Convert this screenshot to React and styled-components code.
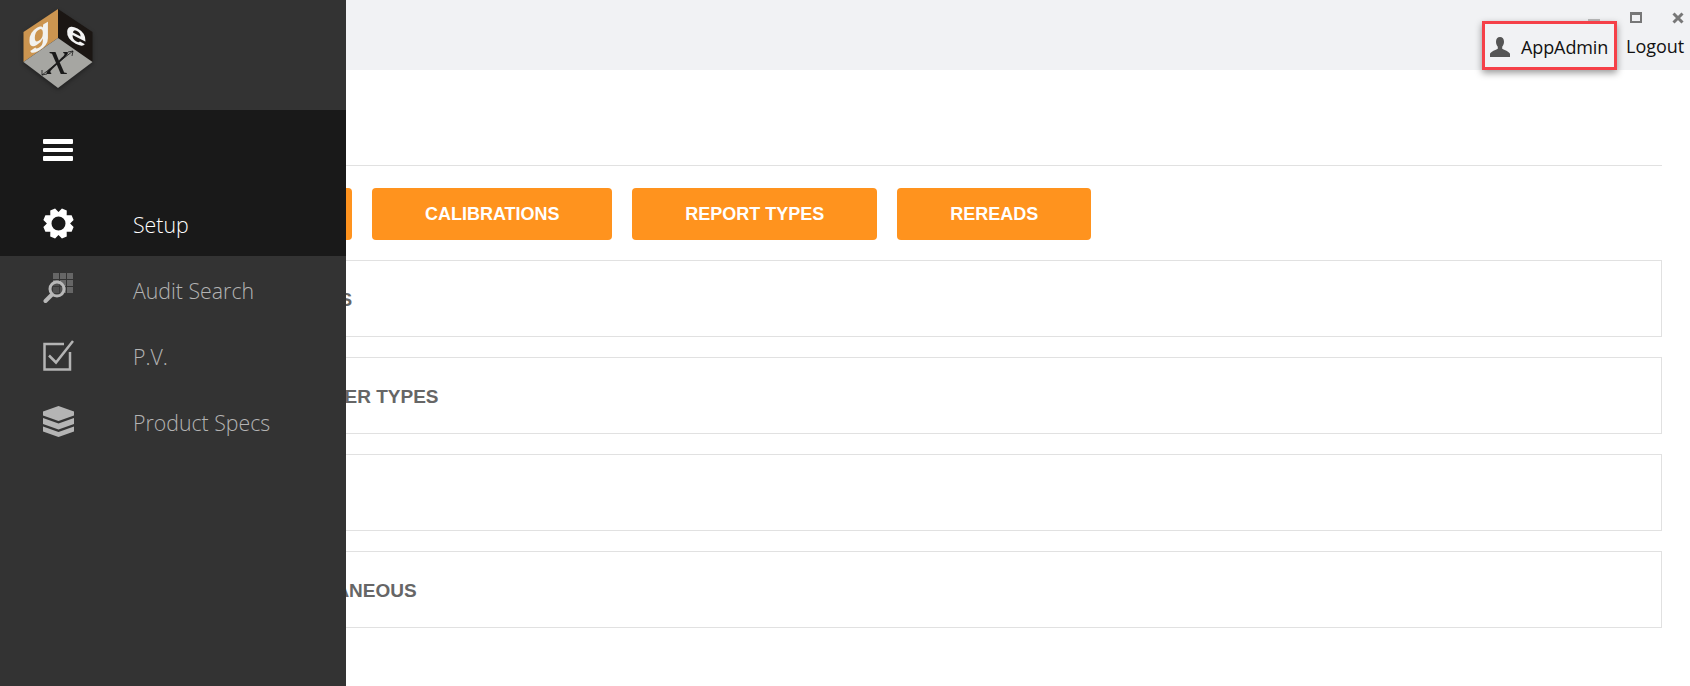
import React from 'react'
import styled, { createGlobalStyle } from 'styled-components'

const Logo = () => (
  <LogoSvg viewBox="0 0 116 98" width="116" height="98">
    <polygon points="58,9 23.5,32 23.5,62 58,38" fill="#cc9550" />
    <polygon points="58,9 92.5,32 92.5,62 58,38" fill="#1b1613" />
    <polygon points="58,38 92.5,62 58,88 23.5,62" fill="#a6a6a2" />
    <text transform="matrix(1.15 -0.65 0 1 28 50)" fontFamily="Liberation Sans" fontWeight="700" fontSize="32" fill="#f2f2f0">g</text>
    <text transform="matrix(1.35 0.7 -0.1 1 65 38)" fontFamily="Liberation Sans" fontWeight="700" fontSize="28" fill="#f4f4f4">e</text>
    <text x="47" y="74" fontFamily="Liberation Serif" fontStyle="italic" fontSize="48" fill="#1a1a1a">x</text>
    <path d="M42 75l31-24M73 51l-5 1M73 51l-1 5M42 75l5-1M42 75l0-5" stroke="#1a1a1a" strokeWidth="0.8" fill="none" />
  </LogoSvg>
)

const Burger = () => (
  <BurgerBox>
    <i />
    <i />
    <i />
  </BurgerBox>
)

// eight blunt teeth, first one a bit off the vertical like the original glyph
const gearPath = () => {
  const pts = []
  for (let i = 0; i < 8; i++) {
    const a = ((i * 45 + 22.5) * Math.PI) / 180
    const w = 0.17
    const g = 0.22
    ;[
      [a - g - w, 11.6],
      [a - w, 15.5],
      [a + w, 15.5],
      [a + g + w, 11.6]
    ].forEach(([t, r]) => pts.push((15.5 + r * Math.sin(t)).toFixed(2) + ' ' + (15.5 - r * Math.cos(t)).toFixed(2)))
  }
  return 'M' + pts.join('L') + 'Z'
}

const GearIcon = () => (
  <svg viewBox="0 0 31 31" width="31" height="31">
    <path
      fill="#fff"
      fillRule="evenodd"
      d={gearPath() + 'M15.5 8.500a7 7 0 1 0 0 14a7 7 0 1 0 0-14Z'}
    />
  </svg>
)

const AuditIcon = () => (
  <svg viewBox="0 0 32 32" width="32" height="32">
    <g fill="#666">
      {[10, 17, 24].map(x => [0, 7, 14].map(y => <rect key={x + '-' + y} x={x} y={y} width="6" height="6" />))}
    </g>
    <circle cx="14" cy="16" r="7" fill="rgba(60,60,60,0.55)" stroke="#b8b8b8" strokeWidth="3" />
    <path d="M8.500 22L2.500 28" stroke="#b8b8b8" strokeWidth="4" strokeLinecap="round" />
  </svg>
)

const CheckIcon = () => (
  <svg viewBox="0 0 31 31" width="31" height="31" fill="none" stroke="#b4b4b4">
    <path d="M27 12v17.500H1.500V4H21" strokeWidth="2.500" />
    <path d="M6 15.500l7 7L30 1" strokeWidth="2.500" />
  </svg>
)

const StackIcon = () => (
  <svg viewBox="0 0 31 31" width="31" height="31" fill="#b4b4b4">
    <path d="M15.500 0L31 5.500v4L15.500 15 0 9.500v-4z" />
    <path d="M0 12l15.500 5.500L31 12v6l-15.500 5.500L0 18z" />
    <path d="M0 20.500L15.500 26 31 20.500V25.500L15.500 31 0 25.500z" />
  </svg>
)

const UserIcon = () => (
  <svg viewBox="0 0 20 20" width="20" height="20" fill="#555">
    <path d="M10 0C7.500 0 6 2 6 4.800c0 2 .8 3.800 1.800 5v2C5.800 13 1 14.500 0 16.800V20h20v-3.200c-1-2.300-5.800-3.800-7.800-5v-2c1-1.200 1.800-3 1.800-5C14 2 12.500 0 10 0z" />
  </svg>
)

const CloseIcon = () => (
  <svg viewBox="0 0 12 12" width="12" height="12">
    <path d="M1.500 1.500l9 9M10.500 1.500l-9 9" stroke="#777" strokeWidth="3" />
  </svg>
)

const menu = [
  { label: 'Audit Search', icon: <AuditIcon /> },
  { label: 'P.V.', icon: <CheckIcon /> },
  { label: 'Product Specs', icon: <StackIcon /> }
]

const buttons = ['CALIBRATIONS', 'REPORT TYPES', 'REREADS']
const panels = ['READINGS', 'PARAMETER TYPES', 'UNITS', 'MISCELLANEOUS']

const MenuItem = ({ label, icon, active }) => (
  <Row>
    <IconSlot>{icon}</IconSlot>
    <RowLabel $active={active}>{label}</RowLabel>
  </Row>
)

const App = () => (
  <Page>
    <GlobalStyle />
    <Sidebar>
      <Brand>
        <Logo />
      </Brand>
      <ActiveArea>
        <BurgerRow>
          <Burger />
        </BurgerRow>
        <MenuItem label="Setup" icon={<GearIcon />} active />
      </ActiveArea>
      {menu.map(m => (
        <MenuItem key={m.label} {...m} />
      ))}
    </Sidebar>
    <Header>
      <WindowControls>
        <MinButton />
        <MaxButton />
        <CloseIcon />
      </WindowControls>
      <UserBox>
        <UserIcon />
        <span>AppAdmin</span>
      </UserBox>
      <Logout>Logout</Logout>
    </Header>
    <Content>
      <Rule />
      <ButtonRow>
        <OrangeButton $under={324}>GENERAL</OrangeButton>
        {buttons.map(b => (
          <OrangeButton key={b}>{b}</OrangeButton>
        ))}
      </ButtonRow>
      <PanelList>
        {panels.map(p => (
          <Panel key={p}>
            <PanelTitle>{p}</PanelTitle>
          </Panel>
        ))}
      </PanelList>
    </Content>
  </Page>
)

const GlobalStyle = createGlobalStyle`
  html, body {
    margin: 0;
    padding: 0;
    background: #fff;
  }
  * {
    box-sizing: border-box;
  }
`

const Page = styled.div`
  position: relative;
  width: 1690px;
  height: 686px;
  overflow: hidden;
  background: #fff;
  font-family: 'Liberation Sans', Arial, sans-serif;
`

const Sidebar = styled.nav`
  position: absolute;
  z-index: 2;
  top: 0;
  left: 0;
  bottom: 0;
  width: 346px;
  background: #333;
`

const Brand = styled.div`
  height: 110px;
`

const LogoSvg = styled.svg`
  display: block;
  filter: drop-shadow(0 2px 2px rgba(0, 0, 0, 0.35));
`

const ActiveArea = styled.div`
  background: #191919;
  height: 146px;
`

const BurgerRow = styled.div`
  height: 80px;
  display: flex;
  align-items: center;
  padding-left: 43px;
`

const BurgerBox = styled.div`
  width: 30px;
  display: flex;
  flex-direction: column;
  gap: 4px;

  i {
    display: block;
    height: 4.5px;
    border-radius: 1px;
    background: #fff;
  }
`

const Row = styled.div`
  height: 66px;
  display: flex;
  align-items: center;
  padding-left: 43px;
`

const IconSlot = styled.div`
  width: 90px;
  display: flex;
  align-items: center;

  svg {
    display: block;
  }
`

const RowLabel = styled.span`
  font-family: 'Open Sans', sans-serif;
  font-weight: 300;
  font-size: 21.3px;
  line-height: 28px;
  padding-top: 3px;
  color: ${p => (p.$active ? '#fff' : '#b4b4b4')};
`

const Header = styled.header`
  position: relative;
  height: 70px;
  background: #f1f2f4;
  display: flex;
  align-items: flex-end;
  justify-content: flex-end;
`

const WindowControls = styled.div`
  position: absolute;
  top: 12px;
  right: 6px;
  display: flex;
  align-items: flex-start;
`

const MinButton = styled.div`
  width: 12px;
  height: 2px;
  margin: 7px 30px 0 0;
  background: #bbb;
`

const MaxButton = styled.div`
  width: 12px;
  height: 11px;
  margin-right: 30px;
  border: 2px solid #777;
  border-top-width: 3px;
`

const UserBox = styled.div`
  position: relative;
  z-index: 1;
  width: 135px;
  height: 49px;
  margin-right: 1px;
  padding: 2px 0 0 5px;
  display: flex;
  align-items: center;
  gap: 11px;
  border: 3px solid #f54048;
  box-shadow: 0 3px 7px rgba(0, 0, 0, 0.4);
  font-family: 'Open Sans', sans-serif;
  font-size: 18px;
  letter-spacing: -0.1px;
  color: #111;
`

const Logout = styled.div`
  width: 72px;
  height: 49px;
  padding: 1px 0 0 8px;
  display: flex;
  align-items: center;
  font-family: 'Open Sans', sans-serif;
  font-size: 18px;
  color: #111;
`

const Content = styled.main`
  padding: 95px 28px 0;
`

const Rule = styled.div`
  height: 1px;
  background: #e1e1e1;
`

const ButtonRow = styled.div`
  display: flex;
  gap: 20px;
  margin: 22px 0 20px;
`

const OrangeButton = styled.button`
  height: 52px;
  width: ${p => (p.$under ? p.$under + 'px' : 'auto')};
  padding: ${p => (p.$under ? '0 20px' : '0 52.9px')};
  border: 0;
  border-radius: 4px;
  background: #ff931e;
  color: #fff;
  text-align: ${p => (p.$under ? 'left' : 'center')};
  font-family: 'Liberation Sans', Arial, sans-serif;
  font-size: 18px;
  font-weight: 700;
`

const PanelList = styled.div`
  display: flex;
  flex-direction: column;
  gap: 20px;
`

const Panel = styled.section`
  height: 77px;
  display: flex;
  align-items: center;
  padding: 3px 0 0 223px;
  border: 1px solid #e1e1e1;
`

const PanelTitle = styled.h3`
  margin: 0;
  font-size: 19px;
  font-weight: 700;
  color: #666;
`

export default App
